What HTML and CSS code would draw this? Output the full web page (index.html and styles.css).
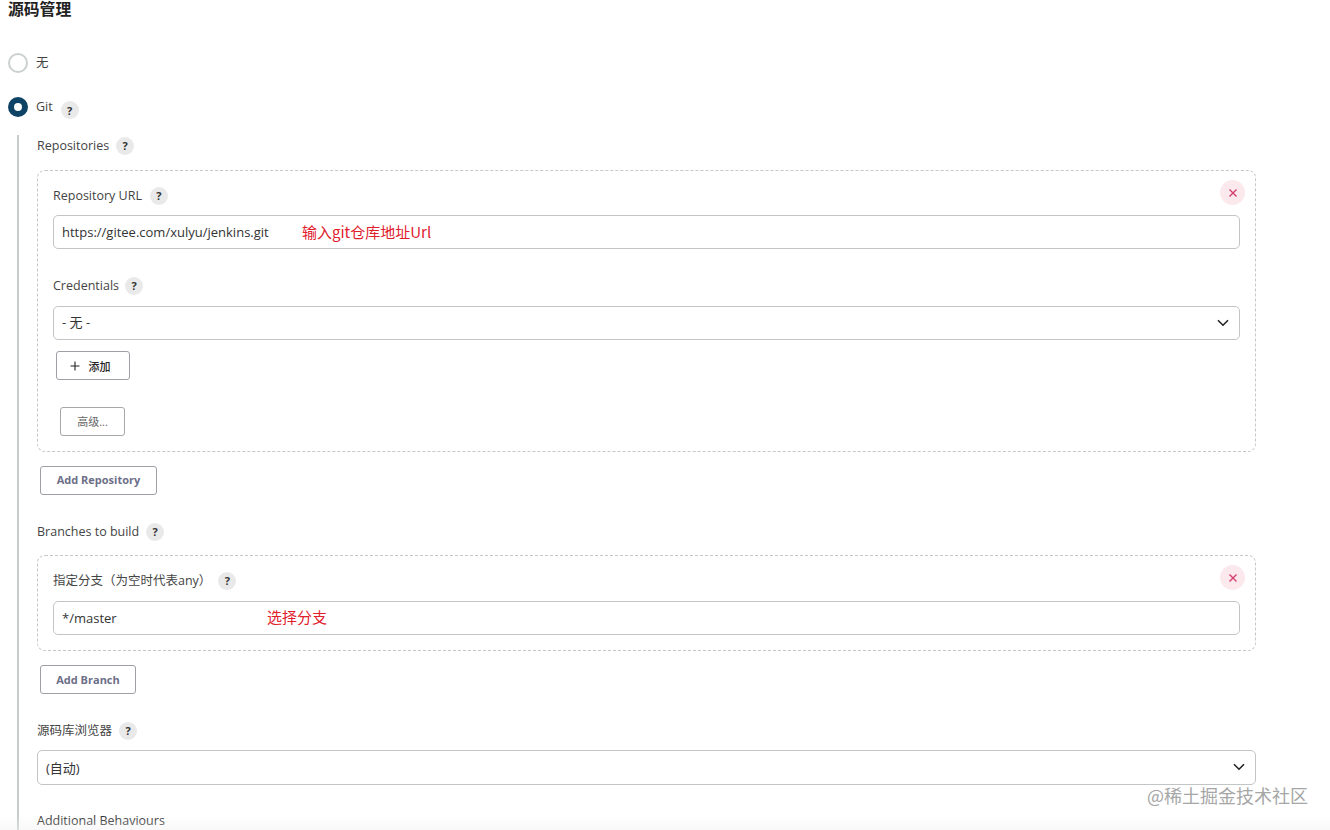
FILE: index.html
```html
<!DOCTYPE html>
<html lang="zh-CN">
<head>
<meta charset="utf-8">
<title>源码管理</title>
<link rel="stylesheet" href="styles.css">
</head>
<body>
<main class="page">
  <h2 class="title">源码管理</h2>
  <div class="radio-row row-none"><span class="radio"></span><span class="radio-label">无</span></div>
  <div class="radio-row row-git"><span class="radio checked"></span><span class="radio-label">Git</span><span class="help help-git">?</span></div>
  <section class="git-body">
    <div class="label">Repositories<span class="help help-mid">?</span></div>
    <div class="box box-repo">
      <button class="close" type="button"><svg width="10" height="10" viewBox="0 0 10 10"><path d="M1.5 1.5l7 7M8.5 1.5l-7 7"/></svg></button>
      <div class="label l-url">Repository URL<span class="help">?</span></div>
      <div class="field">
        <input class="input" value="https://gitee.com/xulyu/jenkins.git">
        <span class="note note-url">输入git仓库地址Url</span>
      </div>
      <div class="label l-cred">Credentials<span class="help help-tight">?</span></div>
      <div class="field">
        <div class="input select select-cred">- 无 -</div>
        <svg class="chev" width="12" height="8" viewBox="0 0 12 8"><path d="M1 1.2l5 5 5-5"/></svg>
      </div>
      <button class="btn btn-add" type="button"><svg width="10" height="10" viewBox="0 0 10 10"><path d="M5 0.5v9M0.5 5h9"/></svg>添加</button>
      <button class="btn btn-adv" type="button">高级...</button>
    </div>
    <button class="btn btn-strong btn-repo" type="button">Add Repository</button>
    <div class="label l-branch">Branches to build<span class="help help-mid">?</span></div>
    <div class="box box-branch">
      <button class="close close-b" type="button"><svg width="10" height="10" viewBox="0 0 10 10"><path d="M1.5 1.5l7 7M8.5 1.5l-7 7"/></svg></button>
      <div class="label l-spec">指定分支（为空时代表any）<span class="help help-mid">?</span></div>
      <div class="field">
        <input class="input" value="*/master">
        <span class="note note-branch">选择分支</span>
      </div>
    </div>
    <button class="btn btn-strong btn-branch" type="button">Add Branch</button>
    <div class="label l-browser">源码库浏览器<span class="help help-mid">?</span></div>
    <div class="field">
      <div class="input select select-auto">(自动)</div>
      <svg class="chev" width="12" height="8" viewBox="0 0 12 8"><path d="M1 1.2l5 5 5-5"/></svg>
    </div>
    <div class="label l-behav">Additional Behaviours</div>
  </section>
</main>
<div class="fade"></div>
<div class="watermark">@稀土掘金技术社区</div>
</body>
</html>
```
FILE: styles.css
```css
* { box-sizing: border-box; }
html, body { margin: 0; height: 830px; overflow: hidden; background: #fff; }
body {
  font-family: "Open Sans", "Noto Sans CJK SC", sans-serif;
  font-size: 12.5px;
  color: #333;
  position: relative;
}
.page { padding-left: 8px; }
.title {
  margin: 0;
  height: 18px;
  font-size: 15.8px;
  line-height: 18px;
  font-weight: 700;
  color: #222;
  font-family: "Noto Sans CJK SC", sans-serif;
}
.radio-row { display: flex; align-items: center; height: 20px; }
.row-none { margin-top: 35px; }
.row-git { margin-top: 24px; }
.radio {
  width: 20px; height: 20px; border-radius: 50%;
  border: 2px solid #ccd0d0;
  background: #fff;
  flex: none;
}
.radio.checked { border: 6.5px solid #0f4366; }
.radio-label { margin-left: 8px; line-height: 18px; color: #444; }
.help {
  display: inline-flex; align-items: center; justify-content: center;
  width: 18px; height: 18px; border-radius: 50%;
  background: #e9e9e9;
  color: #333;
  font-size: 11px; font-weight: 700;
  margin-left: 8px;
  flex: none;
}
.help-git { position: relative; top: 3px; }
.help-mid { margin-left: 7px; }
.help-tight { margin-left: 7px; position: relative; left: -1px; }
.git-body {
  margin-left: 9px;
  margin-top: 18px;
  padding-left: 18px;
  padding-top: 2px;
  width: 1239px;
  border-left: 2px solid #c8cccc;
  height: 700px;
}
.label { display: flex; align-items: center; height: 18px; line-height: 18px; color: #444; }
.box {
  position: relative;
  border: 1px dashed #c4c8c8;
  border-radius: 8px;
  padding: 0 15px;
}
.box-repo { height: 282px; margin-top: 15px; }
.box-branch { height: 96px; margin-top: 14px; }
.l-url { margin-top: 16px; }
.l-spec { margin-top: 16px; }
.field { position: relative; }
.input {
  display: block;
  width: 100%;
  height: 34px;
  border: 1px solid #c2c5c5;
  border-radius: 5px;
  background: #fff;
  padding: 0 8px;
  font: inherit;
  font-size: 13px;
  line-height: 32px;
  color: #333;
  outline: none;
}
.select-cred { line-height: 30px; }
.l-url + .field { margin-top: 10px; }
.l-spec + .field { margin-top: 11px; }
.l-cred { margin-top: 28px; }
.l-cred + .field { margin-top: 11px; }
.note {
  position: absolute;
  color: #e0202c;
  font-size: 15px;
  line-height: 20px;
  font-family: "Noto Sans CJK SC", sans-serif;
}
.note-url { left: 249px; top: 7px; }
.note-branch { left: 214px; top: 6px; }
.chev { position: absolute; right: 11px; top: 13px; }
.chev path { fill: none; stroke: #222; stroke-width: 1.6; }
.close {
  position: absolute;
  top: 9px; right: 10px;
  width: 25px; height: 25px;
  padding: 0;
  border: 0; border-radius: 50%;
  background: #fbe9ee;
  display: flex; align-items: center; justify-content: center;
}
.close path { fill: none; stroke: #d33f6b; stroke-width: 1.4; }
.btn {
  display: flex; align-items: center; justify-content: center;
  height: 29px;
  border: 1px solid #9ea0a6;
  border-radius: 3px;
  background: #fff;
  padding: 0 0 2px;
  font: inherit;
  font-size: 11px;
}
.btn-add {
  margin: 11px 0 0 3px; width: 74px; gap: 9px; padding: 0 6px 0 0; color: #222; font-weight: 500;
}
.btn-add path { fill: none; stroke: #222; stroke-width: 1.1; }
.btn-adv { margin: 27px 0 0 7px; width: 65px; color: #666; border-color: #a8a8a8; }
.btn-strong { font-weight: 700; color: #6d6f88; }
.btn-repo { margin: 14px 0 0 3px; width: 117px; }
.l-branch { margin-top: 28px; }
.btn-branch { margin: 14px 0 0 3px; width: 96px; padding-bottom: 0; }
.l-browser { margin-top: 28px; margin-bottom: 10px; }
.select-auto { height: 35px; line-height: 35px; }
.l-behav { margin-top: 27px; color: #333; }
.fade {
  position: absolute;
  left: 0; right: 0; bottom: 0;
  height: 14px;
  background: linear-gradient(rgba(240,240,240,0), rgba(240,240,240,.45));
}
.watermark {
  position: absolute;
  left: 1147px; top: 783px;
  font-size: 18px;
  line-height: 24px;
  color: #a6a6a6;
  font-family: "Noto Sans CJK SC", sans-serif;
}
```
